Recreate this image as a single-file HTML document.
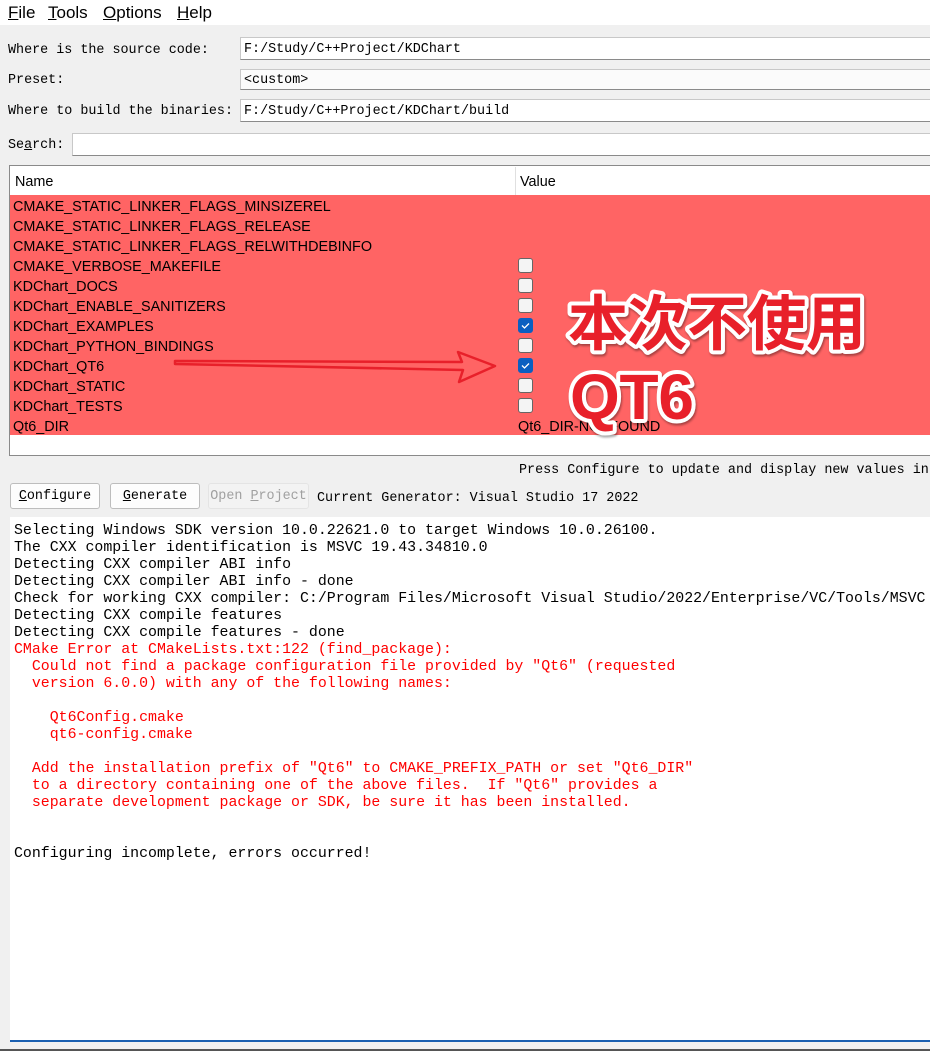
<!DOCTYPE html>
<html><head><meta charset="utf-8"><style>
*{margin:0;padding:0;box-sizing:border-box}
body{width:930px;height:1051px;background:#f0f0f0;position:relative;overflow:hidden;font-family:"Liberation Sans",sans-serif}
.abs{position:absolute}
.mono{font-family:"Liberation Mono","DejaVu Sans Mono",monospace;font-size:13.4px;color:#000;white-space:pre}
.field{position:absolute;background:#fff;border:1px solid #c8c8c8;border-bottom:1px solid #8a8a8a;height:23px;padding:4px 0 0 3px}
.row{position:absolute;left:13px;height:20px;line-height:20px;font-size:14.4px;color:#000;white-space:pre;padding-top:2px}
.cb{position:absolute;left:518px;width:15px;height:15px;border:1px solid #666;border-radius:3px;background:#f4f4f4}
.cb.on{background:#0a5fc0;border-color:#0a5fc0}
.btn{position:absolute;top:483px;height:26px;border:1px solid #bdbdbd;border-radius:3px;background:#fdfdfd;line-height:24px;text-align:center;padding-top:3px;line-height:20px}
.log{position:absolute;left:14px;font-family:"Liberation Mono",monospace;font-size:14.9px;line-height:17px;white-space:pre;color:#000}
.r{color:#f00}
.m{position:absolute;top:3px;font-size:17px}
u{text-decoration:underline}
</style></head><body>
<div class="abs" style="left:0;top:0;width:930px;height:25px;background:#fff"></div>
<div class="m" style="left:8px"><u>F</u>ile</div>
<div class="m" style="left:48px"><u>T</u>ools</div>
<div class="m" style="left:103px"><u>O</u>ptions</div>
<div class="m" style="left:177px"><u>H</u>elp</div>

<div class="abs mono" style="left:8px;top:43px">Where is the source code:</div>
<div class="field mono" style="left:240px;top:37px;width:700px">F:/Study/C++Project/KDChart</div>
<div class="abs mono" style="left:8px;top:73px">Preset:</div>
<div class="field mono" style="left:240px;top:69px;width:700px;height:21px;background:#fbfbfb;padding-top:3px">&lt;custom&gt;</div>
<div class="abs mono" style="left:8px;top:104px">Where to build the binaries:</div>
<div class="field mono" style="left:240px;top:99px;width:700px">F:/Study/C++Project/KDChart/build</div>
<div class="abs mono" style="left:8px;top:138px">Se<u>a</u>rch:</div>
<div class="field" style="left:72px;top:133px;width:870px"></div>

<div class="abs" style="left:9px;top:165px;width:930px;height:291px;background:#fff;border:1px solid #8a8a8a"></div>
<div class="abs" style="left:515px;top:167px;width:1px;height:28px;background:#e0e0e0"></div>
<div class="abs" style="left:15px;top:174px;font-size:14.4px">Name</div>
<div class="abs" style="left:520px;top:174px;font-size:14.4px">Value</div>
<div class="abs" style="left:10px;top:195px;width:920px;height:240px;background:#ff6464"></div>
<div class="row" style="top:195px">CMAKE_STATIC_LINKER_FLAGS_MINSIZEREL</div>
<div class="row" style="top:215px">CMAKE_STATIC_LINKER_FLAGS_RELEASE</div>
<div class="row" style="top:235px">CMAKE_STATIC_LINKER_FLAGS_RELWITHDEBINFO</div>
<div class="row" style="top:255px">CMAKE_VERBOSE_MAKEFILE</div>
<div class="row" style="top:275px">KDChart_DOCS</div>
<div class="row" style="top:295px">KDChart_ENABLE_SANITIZERS</div>
<div class="row" style="top:315px">KDChart_EXAMPLES</div>
<div class="row" style="top:335px">KDChart_PYTHON_BINDINGS</div>
<div class="row" style="top:355px">KDChart_QT6</div>
<div class="row" style="top:375px">KDChart_STATIC</div>
<div class="row" style="top:395px">KDChart_TESTS</div>
<div class="row" style="top:415px">Qt6_DIR</div>
<div class="row" style="top:415px;left:518px">Qt6_DIR-NOTFOUND</div>
<div class="cb" style="top:258px"></div>
<div class="cb" style="top:278px"></div>
<div class="cb" style="top:298px"></div>
<div class="cb on" style="top:318px"></div>
<div class="cb" style="top:338px"></div>
<div class="cb on" style="top:358px"></div>
<div class="cb" style="top:378px"></div>
<div class="cb" style="top:398px"></div>

<svg class="abs" style="left:0;top:0" width="930" height="460">
<path d="M522,325.5 l2.5,2.5 l4.5,-4.5 M522,365.5 l2.5,2.5 l4.5,-4.5" stroke="#fff" stroke-width="1.3" fill="none"/>
<path d="M175,361 L462,362 L458,352 L495,366 L459,382 L463,370 L175,364 Z" fill="none" stroke="#e8202a" stroke-width="2.5" stroke-linejoin="round"/>
<g font-weight="bold" fill="#e8202a" stroke="#fff" stroke-width="8" paint-order="stroke" stroke-linejoin="round" style="filter:drop-shadow(1px 2px 1px rgba(0,0,0,.35))">
<text x="568" y="345" font-size="60" font-family="'Noto Sans CJK SC','WenQuanYi Zen Hei',sans-serif" textLength="298">本次不使用</text>
<text x="570" y="419" font-size="64" font-family="'Liberation Sans',sans-serif" textLength="124">QT6</text>
</g>
</svg>

<div class="abs mono" style="left:519px;top:463px">Press Configure to update and display new values in</div>
<div class="btn mono" style="left:10px;width:90px"><u>C</u>onfigure</div>
<div class="btn mono" style="left:110px;width:90px"><u>G</u>enerate</div>
<div class="btn mono" style="left:208px;width:101px;color:#a0a0a0;border-color:#e4e4e4;background:#f3f3f3">Open <u>P</u>roject</div>
<div class="abs mono" style="left:317px;top:491px">Current Generator: Visual Studio 17 2022</div>

<div class="abs" style="left:10px;top:517px;width:920px;height:525px;background:#fff;border-bottom:2px solid #1a5fb0"></div>
<div class="log" style="top:523px">Selecting Windows SDK version 10.0.22621.0 to target Windows 10.0.26100.
The CXX compiler identification is MSVC 19.43.34810.0
Detecting CXX compiler ABI info
Detecting CXX compiler ABI info - done
Check for working CXX compiler: C:/Program Files/Microsoft Visual Studio/2022/Enterprise/VC/Tools/MSVC
Detecting CXX compile features
Detecting CXX compile features - done
<span class="r">CMake Error at CMakeLists.txt:122 (find_package):
  Could not find a package configuration file provided by "Qt6" (requested
  version 6.0.0) with any of the following names:

    Qt6Config.cmake
    qt6-config.cmake

  Add the installation prefix of "Qt6" to CMAKE_PREFIX_PATH or set "Qt6_DIR"
  to a directory containing one of the above files.  If "Qt6" provides a
  separate development package or SDK, be sure it has been installed.</span>


Configuring incomplete, errors occurred!</div>
<div class="abs" style="left:0;top:1049px;width:930px;height:2px;background:#555"></div>
</body></html>
